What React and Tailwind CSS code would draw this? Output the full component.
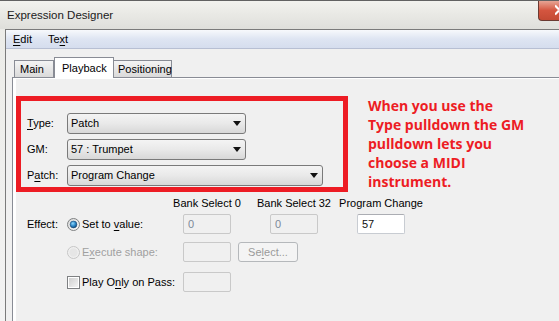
import React from 'react';

const ui = "font-['Liberation_Sans',Arial,sans-serif]";

function U({ children }) {
  return <span className="underline decoration-1 underline-offset-[2px]">{children}</span>;
}

function Combo({ value, width }) {
  return (
    <div className={`flex h-[21px] ${width} items-center justify-between rounded-[3px] border border-[#7a7a7a] bg-gradient-to-b from-[#f4f4f4] via-[#e9e9e9] to-[#d8d8d8] pl-[3px] pr-[4px]`}>
      <span className="leading-none">{value}</span>
      <svg width="8" height="5" viewBox="0 0 8 5">
        <path d="M0 0h8L4 5z" fill="#111" />
      </svg>
    </div>
  );
}

function Radio({ checked, disabled }) {
  return (
    <svg width="13" height="13" viewBox="0 0 13 13">
      <defs>
        <radialGradient id="rbDot" cx="40%" cy="35%" r="70%">
          <stop offset="0%" stopColor="#8fd7fb" />
          <stop offset="55%" stopColor="#2a86c8" />
          <stop offset="100%" stopColor="#0d3f6e" />
        </radialGradient>
        <linearGradient id="rbBg" x1="0" y1="0" x2="1" y2="1">
          <stop offset="0%" stopColor="#d8d8d8" />
          <stop offset="100%" stopColor="#fbfbfb" />
        </linearGradient>
      </defs>
      <circle cx="6.5" cy="6.5" r="6" fill={disabled ? '#f0f0f0' : 'url(#rbBg)'} stroke={disabled ? '#c6c6c6' : '#7e8082'} />
      {disabled && <circle cx="6.5" cy="6.5" r="4.2" fill="#e6e6e6" />}
      {checked && <circle cx="6.5" cy="6.5" r="3.4" fill="url(#rbDot)" stroke="#1d4a73" strokeWidth="0.6" />}
    </svg>
  );
}

function Check() {
  return (
    <div className="flex h-[13px] w-[13px] items-center justify-center border border-[#7e8082] bg-white">
      <div className="h-[9px] w-[9px] bg-gradient-to-br from-[#cfcfcf] to-[#f4f4f4]" />
    </div>
  );
}

function Field({ value, enabled }) {
  return enabled ? (
    <div className="flex h-[20px] w-[48px] items-center rounded-[2px] border border-[#c8ccd2] border-t-[#abadb3] bg-white pl-[4px] text-[#111]">{value}</div>
  ) : (
    <div className="flex h-[20px] w-[48px] items-center rounded-[2px] border border-[#c9c9c9] bg-[#f0f0f0] pl-[4px] text-[#7d8898]">{value}</div>
  );
}

export default function App() {
  return (
    <div className={`flex h-[321px] w-[559px] flex-col overflow-hidden bg-gradient-to-b from-[#ebebe7] to-[#f3f3f3] text-[11px] text-black ${ui}`}>
      {/* title bar */}
      <div className="flex h-[29px] shrink-0 border-t border-[#626262] bg-gradient-to-b from-[#f2f2ee] to-[#dfdfdb]">
        <div className="pl-[7px] pt-[6px] text-[11.5px] text-[#1b1b1b]">Expression Designer</div>
        <div className="ml-auto flex h-[20px] w-[21px] items-start justify-end overflow-hidden rounded-bl-[4px] border-b border-l border-[#6b3a32] bg-gradient-to-b from-[#e6a494] via-[#d4553f] to-[#c44a34]">
          <svg width="4" height="14" viewBox="0 0 4 14" className="mt-[3px]">
            <path d="M0 1.5L4 5.5M0 10.5L4 6.5" stroke="#fff" strokeWidth="2.2" />
          </svg>
        </div>
      </div>

      <div className="flex min-h-0 flex-1 pl-[5px]">
        <div className="flex flex-1 flex-col border-l border-t border-[#7b7b7b] bg-[#f0f0f0]">
          {/* menu bar */}
          <div className="flex h-[19px] shrink-0 items-center gap-[16px] border-b border-[#b7bfd3] bg-gradient-to-b from-[#f7f9fc] via-[#dee5f2] to-[#d5ddee] pl-[7px]">
            <span><U>E</U>dit</span>
            <span>Te<U>x</U>t</span>
          </div>

          {/* client */}
          <div className="flex min-h-0 flex-1 flex-col pl-[6px] pt-[8px]">
            <div className="flex h-[20px] shrink-0 items-end pl-[2px]">
              <div className="flex h-[17px] w-[40px] items-center border border-b-0 border-[#898c95] bg-gradient-to-b from-[#f4f4f4] to-[#dadada] pl-[5px]">Main</div>
              <div className="relative z-10 -mb-px flex h-[21px] w-[60px] items-center border border-b-0 border-[#898c95] bg-white pl-[7px]">Playback</div>
              <div className="flex h-[17px] w-[58px] items-center border border-b-0 border-l-0 border-[#898c95] bg-gradient-to-b from-[#f4f4f4] to-[#dadada] pl-[4px]">Positioning</div>
            </div>

            <div className="flex min-h-0 flex-1 border-l border-t border-[#898c95] bg-white pl-[3px] pt-px">
              <div className="flex-1 bg-[#f0f0f0] pt-[17px]">
                <div className="flex items-start">
                  <div className="flex h-[96px] w-[332px] flex-col gap-[5px] border-[5px] border-[#ed1c24] pl-[6px] pt-[12px]">
                    <div className="flex items-center">
                      <span className="w-[40px]"><U>T</U>ype:</span>
                      <Combo value="Patch" width="w-[179px]" />
                    </div>
                    <div className="flex items-center">
                      <span className="w-[40px]">GM:</span>
                      <Combo value="57 : Trumpet" width="w-[179px]" />
                    </div>
                    <div className="flex items-center">
                      <span className="w-[40px]">P<U>a</U>tch:</span>
                      <Combo value="Program Change" width="w-[256px]" />
                    </div>
                  </div>
                  <div className="ml-[20px] font-['Open_Sans',sans-serif] text-[14px] font-bold leading-[19px] text-[#ed1c24]">
                    <div>When you use the</div>
                    <div>Type pulldown the GM</div>
                    <div>pulldown lets you</div>
                    <div>choose a MIDI</div>
                    <div>instrument.</div>
                  </div>
                </div>

                {/* effect section */}
                <div className="mt-[4px] flex h-[14px] items-center gap-[39px] pl-[167px]">
                  <div className="flex w-[48px] justify-center whitespace-nowrap">Bank Select 0</div>
                  <div className="flex w-[48px] justify-center whitespace-nowrap">Bank Select 32</div>
                  <div className="flex w-[48px] justify-center whitespace-nowrap">Program Change</div>
                </div>

                <div className="mt-[4px] flex h-[20px] items-center">
                  <span className="w-[51px] pl-[11px]">Effect:</span>
                  <div className="flex w-[15px] items-center"><Radio checked /></div>
                  <span className="w-[101px]">Set to <U>v</U>alue:</span>
                  <Field value="0" />
                  <div className="ml-[39px]"><Field value="0" /></div>
                  <div className="ml-[39px]"><Field value="57" enabled /></div>
                </div>

                <div className="mt-[8px] flex h-[20px] items-center">
                  <span className="w-[51px]" />
                  <div className="flex w-[15px] items-center"><Radio disabled /></div>
                  <span className="w-[101px] text-[#a0a0a0]">E<U>x</U>ecute shape:</span>
                  <Field value="" />
                  <div className="ml-[7px] flex h-[20px] w-[60px] items-center justify-center rounded-[3px] border border-[#b5b8bb] bg-[#f4f4f4] text-[#9a9a9a]">Se<U>l</U>ect...</div>
                </div>

                <div className="mt-[10px] flex h-[20px] items-center">
                  <span className="w-[51px]" />
                  <div className="flex w-[15px] items-center"><Check /></div>
                  <span className="w-[101px]">Play O<U>n</U>ly on Pass:</span>
                  <Field value="" />
                </div>
              </div>
            </div>
          </div>
        </div>
      </div>
    </div>
  );
}
